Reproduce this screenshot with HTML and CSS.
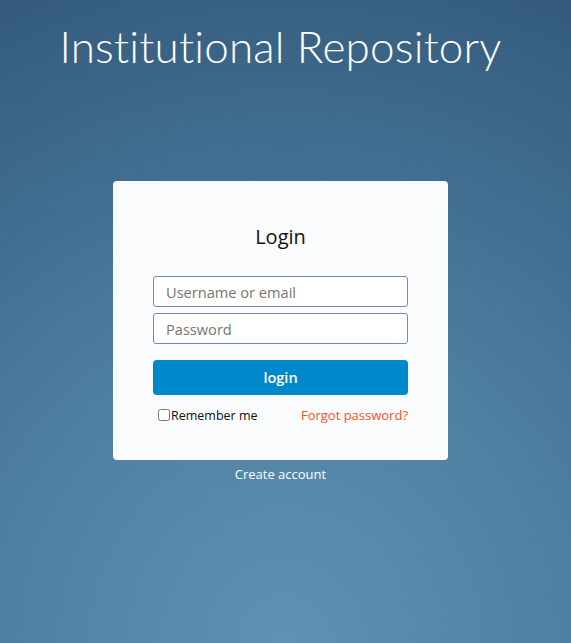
FILE: index.html
```html
<!DOCTYPE html>
<html lang="en">
<head>
<meta charset="utf-8">
<title>Institutional Repository - Login</title>
<link rel="stylesheet" href="styles.css">
</head>
<body>
<div class="page">
  <h1 class="site-title">Institutional Repository</h1>
  <div class="card">
    <h2 class="card-title">Login</h2>
    <form class="form">
      <input class="field" type="text" placeholder="Username or email">
      <input class="field" type="password" placeholder="Password">
      <button class="btn" type="button">login</button>
      <div class="row">
        <label class="remember"><input type="checkbox" class="check">Remember me</label>
        <a class="forgot" href="#">Forgot password?</a>
      </div>
    </form>
  </div>
  <a class="create" href="#">Create account</a>
</div>
</body>
</html>
```

FILE: styles.css
```css
html, body {
  margin: 0;
  height: 100%;
}
body {
  background: radial-gradient(ellipse 120% 110% at 50% 100%, #5f92b2 0%, #4c7ea0 45%, #335a7c 100%);
  font-family: "Open Sans", "Liberation Sans", sans-serif;
  min-height: 643px;
}
.page {
  display: flex;
  flex-direction: column;
  align-items: center;
  padding-right: 10px;
}
.site-title {
  margin: 20px 0 0 0;
  font-family: Lato, "Open Sans", sans-serif;
  font-weight: 300;
  font-size: 44px;
  line-height: 52px;
  color: #ffffff;
  letter-spacing: 0.2px;
}
.card {
  margin-top: 109px;
  width: 335px;
  height: 279px;
  box-sizing: border-box;
  background: #f9fbfd;
  border-radius: 4px;
  padding: 42px 40px 0 40px;
}
.card-title {
  margin: 0;
  text-align: center;
  font-weight: 400;
  font-size: 20px;
  line-height: 28px;
  color: #111;
}
.form {
  margin-top: 25px;
  display: flex;
  flex-direction: column;
}
.field {
  box-sizing: border-box;
  width: 255px;
  height: 31px;
  margin: 0 0 6px 0;
  padding: 0 12px;
  border: 1px solid #6d8db5;
  border-radius: 3px;
  background: #fff;
  font-family: "Open Sans", sans-serif;
  font-size: 14.6px;
  color: #333;
}
.field::placeholder {
  color: #757575;
}
.btn {
  margin-top: 10px;
  height: 35px;
  border: 0;
  border-radius: 4px;
  background: #0088cc;
  color: #fff;
  font-family: "Open Sans", sans-serif;
  font-weight: 600;
  font-size: 14.5px;
}
.row {
  margin-top: 11px;
  display: flex;
  justify-content: space-between;
  align-items: center;
  font-size: 12.5px;
}
.remember {
  display: flex;
  align-items: center;
  color: #111;
  padding-left: 5px;
}
.check {
  margin: 0 1px 0 0;
  width: 12px;
  height: 12px;
}
.forgot {
  color: #fb4f27;
  text-decoration: none;
  font-size: 13px;
}
.create {
  margin-top: 5px;
  color: #fff;
  text-decoration: none;
  font-size: 13px;
  font-weight: 500;
}
```
